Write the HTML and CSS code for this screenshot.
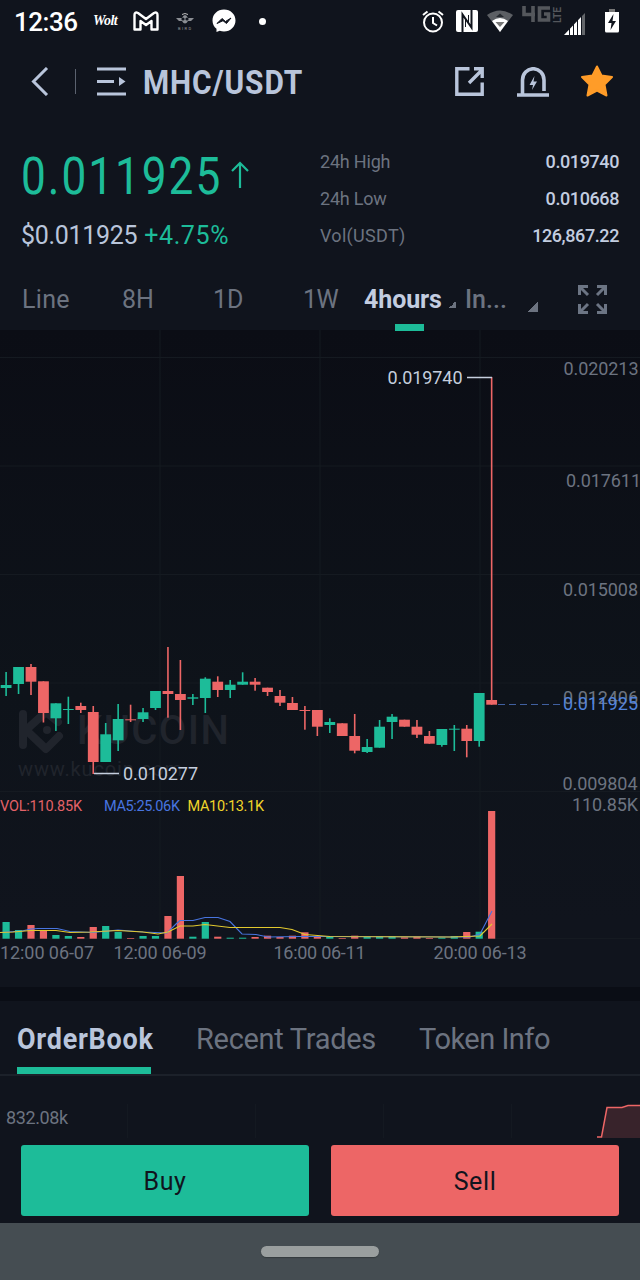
FILE: index.html
```html
<!DOCTYPE html>
<html lang="en">
<head>
  <meta charset="UTF-8">
  <meta name="viewport" content="width=device-width, initial-scale=1.0">
  <title>MHC/USDT</title>
  <link rel="stylesheet" href="styles.css">
</head>
<body>
  <div class="status-bar">
    <span class="clock">12:36</span>
    <span class="wolt">Wolt</span>
    <svg class="gmail" width="26" height="20" viewBox="0 0 26 20"><path d="M1.500 18.500V4Q1.500 .5 5 2L13 8L21 2Q24.500 .5 24.500 4V18.500H18.500V10L13 14L7.500 10V18.500Z" fill="none" stroke="#fff" stroke-width="2.400" stroke-linejoin="round"/></svg>
    <svg class="bird" width="20" height="18" viewBox="0 0 20 18"><path d="M1 5H7Q10-1 13 5H19L16 8H13Q10 13 7 8H4Z" fill="#8b8e94"/><circle cx="8" cy="6" r="1.600" fill="#10141d"/><circle cx="12" cy="6" r="1.600" fill="#10141d"/><path d="M7 1.500Q10-.5 13 1.500" stroke="#bbb" fill="none"/><text x="3" y="17" class="bird-text">BIRD</text></svg>
    <svg class="messenger" width="24" height="24" viewBox="0 0 24 24"><path d="M12 .5C5.500.5.5 5.200.5 11.500C.5 15 2 17.800 4.500 19.800V23L7.700 21.800C16 24.500 23.500 19 23.500 11.500C23.500 5.200 18.500.5 12 .5Z" fill="#fff"/><path d="M5 14.500L10 9.500L13.500 12.500L19 9L14.500 14.500L11 11.700Z" fill="#10141d" stroke="#10141d"/></svg>
    <i class="dot"></i>
    <svg class="alarm" width="22" height="24" viewBox="0 0 22 24"><circle cx="11" cy="13.500" r="9" fill="none" stroke="#fff" stroke-width="2"/><path d="M1 6L5.500 2.500M21 6L16.500 2.500M11 8V14L15 16.500" fill="none" stroke="#fff" stroke-width="2"/></svg>
    <svg class="nfc" width="22" height="22" viewBox="0 0 22 22"><rect width="22" height="22" rx="2" fill="#fff"/><path d="M6.500 22V4.500L15.500 17.500V0" fill="none" stroke="#10141d" stroke-width="2"/><path d="M9.500 17V9M12.500 5V13" fill="none" stroke="#10141d" stroke-width="1"/></svg>
    <svg class="wifi" width="26" height="22" viewBox="0 0 26 22"><path d="M0 5Q13-4 26 5L13 22Z" fill="#5c5f64"/><path d="M5 11Q13 5 21 11L13 22Z" fill="#fff"/><path d="M8.500 12H17.500L13 17Z" fill="#777"/><path d="M9 7L13 3.500L17 7Z" fill="#25292f"/></svg>
    <svg class="lte" width="40" height="18" viewBox="0 0 40 18"><path d="M2 0V8.500H13M11 0V16M28 2H17.500V14H26.500V8H22" fill="none" stroke="#54575c" stroke-width="3.600"/><text transform="translate(38.500 17) rotate(-90)" textLength="16" class="lte-text">LTE</text></svg>
    <svg class="signal" width="21" height="22" viewBox="0 0 21 22"><path d="M0 22L17 4V22Z" fill="#fff"/><path d="M18 3L21 0V22H18Z" fill="#63666a"/><path d="M5.500 15V22M9.500 10V22M13.500 6V22M17.500 2V22" stroke="#10141d"/></svg>
    <svg class="battery" width="14" height="24" viewBox="0 0 14 24"><path d="M4 0H10V3H4Z" fill="#777"/><path d="M0 3H14V22Q14 23.500 12.500 23.500H1.500Q0 23.500 0 22Z" fill="#fff"/><path d="M8.500 5L3 14H6.500L5.500 21L11 12H7.500Z" fill="#10141d"/></svg>
  </div>

  <div class="title-bar">
    <svg class="back" width="18" height="29" viewBox="0 0 18 29"><path d="M16 1L2.500 14.500L16 28" fill="none" stroke="#b9c5db" stroke-width="3"/></svg>
    <i class="divider"></i>
    <svg class="menu" width="29" height="29" viewBox="0 0 29 29"><path d="M0 2H29M0 14.500H17M0 27H29" stroke="#b9c5db" stroke-width="3"/><path d="M22 10L28.500 14.500L22 19Z" fill="#b9c5db"/></svg>
    <h1><span>MHC/USDT</span></h1>
    <svg class="share" width="30" height="29" viewBox="0 0 30 29"><path d="M14.500 1.800H1.800V27.200H27.200V15.500M14 16L26.500 3.500M19 1.800H27.200V11" fill="none" stroke="#b9c5db" stroke-width="3.400"/></svg>
    <svg class="alert" width="32" height="30" viewBox="0 0 32 30"><path d="M5.500 28V13A10.500 11 0 0 1 27 13V24M0 28H32" fill="none" stroke="#b9c5db" stroke-width="3.600"/><path d="M17.500 9L12.500 18H16L15 23L20 14.500H16.500Z" fill="#b9c5db"/></svg>
    <svg class="star" width="34" height="32" viewBox="0 0 34 32"><path d="M17 1.500L21.500 10.500L32 12L24.500 19.500L26.500 30.500L17 25.500L7.500 30.500L9.500 19.500L2 12L12.500 10.500Z" fill="#ff9c28" stroke="#ff9c28" stroke-width="2" stroke-linejoin="round"/></svg>
  </div>

  <div class="summary">
    <div class="price-box">
      <div class="price"><span>0.011925</span><svg width="18" height="27" viewBox="0 0 18 27"><path d="M9 27V2M1 10L9 2L17 10" fill="none" stroke="#1dbc99" stroke-width="2.200"/></svg></div>
      <div class="fiat">$0.011925 <span>+4.75%</span></div>
    </div>
    <dl class="stats">
      <dt>24h High</dt><dd>0.019740</dd>
      <dt>24h Low</dt><dd>0.010668</dd>
      <dt>Vol(USDT)</dt><dd>126,867.22</dd>
    </dl>
  </div>

  <div class="intervals">
    <span>Line</span>
    <span>8H</span>
    <span>1D</span>
    <span>1W</span>
    <span class="active">4hours</span>
    <i class="corner small"></i>
    <span class="indicator">In...</span>
    <i class="corner"></i>
    <svg width="29" height="29" viewBox="0 0 29 29"><path d="M1.500 10V1.500H10M2 2L10 10M19 1.500H27.500V10M27 2L19 10M1.500 19V27.500H10M2 27L10 19M27.500 19V27.500H19M27 27L19 19" fill="none" stroke="#6c7584" stroke-width="3"/></svg>
  </div>

  <svg class="chart" id="chart" width="640" height="657" viewBox="0 330 640 657">
    <path class="grid" d="M0 357.500H640M0 466H640M0 574.500H640M0 683H640M0 791.500H640M0 938.500H640M160 330V938M320 330V938M480 330V938"/>
    <g class="watermark">
      <path d="M23 714V745M26 730L46 749L59 736M26 730L46 712L58 722" fill="none" stroke="#20242c" stroke-width="8" stroke-linecap="round" stroke-linejoin="round"/>
      <circle cx="47" cy="730" r="4"/>
      <text x="77" y="744" class="mark" textLength="152">KUCOIN</text>
      <text x="18" y="776" class="site" textLength="164">www.kucoin.com</text>
    </g>
    <g id="candles"></g>
    <g id="volumes"></g>
    <path class="ma5" d="M0 932.500L22 931L31 929L38 928.500L57 928.500L70 931.500L93 932.500L118 930L143 932L167 933L176 924L180 920.500L193 920.500L205 917.500L218 917.500L230 921.500L242 934L256 934.500L268 937L300 936.500L320 936.500L470 937L480 934L492 911"/>
    <path class="ma10" d="M0 932.500L13 932L31 930.500L56 930.500L70 932.500L90 932L118 930.500L143 932L158 934L168 932L180 926L193 926L205 924.500L230 927.500L280 927.500L292 929.500L305 934.500L330 936.500L450 937L480 936L492 924"/>
    <path d="M467 377.500H492M94 773.500H119" stroke="#c5cede" stroke-width="1.400"/>
    <path d="M498 704.500H562" stroke="#4060a0" stroke-dasharray="7 4"/>
    <g class="callout">
      <text x="387.500" y="384" textLength="75">0.019740</text>
      <text x="123" y="780" textLength="75">0.010277</text>
    </g>
    <g class="axis">
      <text x="563.500" y="375" textLength="75">0.020213</text>
      <text x="566" y="487" textLength="75">0.017611</text>
      <text x="563" y="596" textLength="75">0.015008</text>
      <text x="563" y="704" textLength="75">0.012406</text>
      <text x="563" y="710" textLength="75" class="current">0.011925</text>
      <text x="562.500" y="790" textLength="75">0.009804</text>
      <text x="572" y="811" textLength="66">110.85K</text>
      <text x="0" y="959" textLength="94">12:00 06-07</text>
      <text x="113.500" y="959" textLength="93">12:00 06-09</text>
      <text x="273.500" y="959" textLength="92">16:00 06-11</text>
      <text x="433.500" y="959" textLength="93">20:00 06-13</text>
    </g>
    <g class="legend">
      <text x="0" y="811" fill="#e36268" textLength="82">VOL:110.85K</text>
      <text x="104" y="811" fill="#4875e0" textLength="76">MA5:25.06K</text>
      <text x="187.500" y="811" fill="#f0d52a" textLength="76.500">MA10:13.1K</text>
    </g>
  </svg>

  <div class="tabs">
    <span class="active"><b>OrderBook</b></span>
    <span class="trades">Recent Trades</span>
    <span class="token">Token Info</span>
  </div>

  <div class="depth">
    <span>832.08k</span>
    <svg width="44" height="34" viewBox="0 0 44 34"><path d="M6 33L11 4H26L32 2H44V34H6Z" fill="#38232b"/><path d="M1 33H5.500L11 3.500H26L32 1.500H44" fill="none" stroke="#ed6666" stroke-width="1.500"/></svg>
  </div>

  <div class="actions">
    <button class="buy">Buy</button>
    <button class="sell">Sell</button>
  </div>

  <div class="nav-bar"><i></i></div>

  <script src="script.js"></script>
</body>
</html>
```
FILE: styles.css
```css
* {
  box-sizing: border-box;
}

body {
  margin: 0;
  width: 640px;
  height: 1280px;
  overflow: hidden;
  background-color: #10141d;
  font-family: Roboto, "Liberation Sans", sans-serif;
  color: #6c7380;
}

svg {
  display: block;
  flex-shrink: 0;
}

/* status bar */
.status-bar {
  display: flex;
  align-items: flex-start;
  height: 44px;
  padding-left: 14px;
  color: white;
}

.clock {
  width: 79px;
  margin-top: 7px;
  font-size: 26px;
  line-height: 30px;
  font-weight: 500;
  letter-spacing: -0.5px;
}

.wolt {
  width: 40px;
  margin-top: 13px;
  font-family: "Liberation Serif", serif;
  font-size: 14px;
  line-height: 16px;
  font-style: italic;
  font-weight: 700;
  letter-spacing: -0.5px;
}

.gmail {
  margin-top: 11px;
}

.bird {
  margin: 13px 0 0 16px;
}

.bird-text {
  font-size: 4px;
  fill: #999;
  letter-spacing: 1.5px;
}

.messenger {
  margin: 9px 0 0 17px;
}

.dot {
  width: 7px;
  height: 7px;
  margin: 18px 0 0 23px;
  border-radius: 50%;
  background-color: white;
}

.alarm {
  margin: 9px 0 0 156px;
}

.nfc {
  margin: 10px 0 0 12px;
}

.wifi {
  margin: 10px 0 0 9px;
}

.lte {
  margin: 6px 0 0 9px;
}

.lte-text {
  font-size: 10px;
  font-weight: 700;
  fill: #54575c;
}

.signal {
  margin: 13px 0 0 2px;
}

.battery {
  margin: 9px 0 0 20px;
}

/* title */
.title-bar {
  display: flex;
  align-items: center;
  height: 75px;
  padding-left: 31px;
}

.divider {
  width: 1px;
  height: 25px;
  margin: 0 21px 0 26px;
  background-color: #5b626f;
}

h1 {
  width: 312px;
  margin: 0 0 0 17px;
  color: #b9c5db;
  font-size: 34px;
  font-weight: 700;
  letter-spacing: 1px;
}

h1 span {
  display: inline-block;
  transform: scaleX(0.88);
  transform-origin: left;
}

.alert {
  margin-left: 32px;
}

.star {
  margin: -2px 0 0 31px;
}

/* price and 24h stats */
.summary {
  display: flex;
  height: 150px;
  padding: 24px 21px 0;
}

.price-box {
  width: 299px;
}

.price {
  display: flex;
  align-items: center;
  height: 66px;
  color: #1dbc99;
  font-size: 52px;
  letter-spacing: 2.3px;
}

.price span {
  width: 210px;
  transform: scaleX(0.85);
  transform-origin: left;
}

.price svg {
  margin-top: -4px;
}

.fiat {
  margin-top: 10px;
  color: #b9c5db;
  font-size: 25px;
  line-height: 33px;
  letter-spacing: -0.3px;
}

.fiat span {
  margin-left: 1px;
  color: #1dbc99;
  letter-spacing: 0.6px;
}

.stats {
  display: grid;
  grid-template-columns: 1fr 1fr;
  grid-auto-rows: 37px;
  flex: 1;
  margin: 0;
  font-size: 18px;
  line-height: 37px;
}

.stats dt {
  letter-spacing: -0.2px;
}

.stats dt:last-of-type {
  letter-spacing: 0.3px;
}

.stats dd {
  margin: 0;
  color: #c3cde0;
  text-align: right;
  font-weight: 500;
  letter-spacing: -0.4px;
}

/* interval switcher */
.intervals {
  display: flex;
  align-items: center;
  height: 61px;
  padding-left: 22px;
  font-size: 25px;
  line-height: 65px;
}

.intervals span {
  width: 91px;
}

.intervals span:first-child {
  width: 100px;
  letter-spacing: 0.3px;
}

.intervals span:nth-child(4) {
  width: 61px;
  margin-left: -1px;
  letter-spacing: -0.6px;
}

.intervals .active {
  position: relative;
  width: 85px;
  color: #c3cde0;
  font-weight: 700;
  letter-spacing: -0.1px;
}

.intervals .active::after {
  content: "";
  position: absolute;
  left: 31px;
  bottom: 1px;
  width: 29px;
  height: 7px;
  background-color: #1dbc99;
}

.intervals .indicator {
  width: 63px;
  margin-left: 9px;
  font-weight: 500;
}

.corner {
  width: 10px;
  height: 10px;
  margin-top: 15px;
  background: linear-gradient(135deg, transparent 50%, #6c7380 50%);
}

.corner.small {
  width: 7px;
  height: 7px;
  margin-top: 10px;
}

.intervals svg {
  margin-left: 40px;
}

/* chart */
.chart {
  background: linear-gradient(#0b0d15, #0e131a 55%, #10141d 90%);
  font-size: 18px;
}

.grid {
  fill: none;
  stroke: #151a21;
}

.watermark {
  fill: #20242c;
}

.mark {
  font-size: 40px;
  font-weight: 500;
}

.site {
  font-size: 20px;
}

.up {
  fill: #1dbc99;
}

.down {
  fill: #ed6666;
}

.ma5,
.ma10 {
  fill: none;
  stroke: #4875e0;
  stroke-width: 1.1;
}

.ma10 {
  stroke: #e2c92e;
}

.callout {
  fill: #c5cede;
}

.axis {
  fill: #6c7380;
}

.axis .current {
  fill: #5284dc;
}

.legend {
  font-size: 14.5px;
}

/* order book tabs */
.tabs {
  display: flex;
  height: 89px;
  padding-left: 17px;
  border-top: 14px solid #0a0d15;
  border-bottom: 2px solid #1c212a;
  font-size: 29px;
  line-height: 77px;
}

.tabs .active {
  position: relative;
  width: 179px;
  color: #b9c5db;
}

.tabs b {
  display: inline-block;
  letter-spacing: 0.8px;
  transform: scaleX(0.93);
  transform-origin: left;
}

.tabs .active::after {
  content: "";
  position: absolute;
  left: 0;
  top: 66px;
  width: 134px;
  height: 7px;
  background-color: #1dbc99;
}

.trades {
  width: 223px;
  letter-spacing: -0.3px;
}

.token {
  letter-spacing: -0.5px;
}

.depth {
  display: flex;
  justify-content: space-between;
  height: 62px;
  padding: 28px 0 0 6px;
  font-size: 18px;
  line-height: 27px;
  letter-spacing: -0.4px;
  background: repeating-linear-gradient(90deg, transparent 0 127px, #141921 127px 128px) 0 28px no-repeat;
}

/* buttons */
.actions {
  display: flex;
  gap: 22px;
  padding: 7px 21px;
}

.actions button {
  flex: 1;
  height: 71px;
  padding-top: 3px;
  border: none;
  border-radius: 3px;
  font-family: inherit;
  font-size: 25px;
  letter-spacing: 0.6px;
  color: #10141d;
}

.actions .buy {
  background-color: #1dbc99;
}

.actions .sell {
  background-color: #ed6666;
}

.nav-bar {
  display: flex;
  justify-content: center;
  height: 57px;
  padding-top: 23px;
  background-color: #454d52;
}

.nav-bar i {
  width: 118px;
  height: 11px;
  border-radius: 6px;
  background-color: #9a9f9f;
  box-shadow: 0 1px 1px #343b3e;
}
```
FILE: script.js
```js
// [high, body top, body bottom, low, volume top, up]
const candles = [
  [672, 685, 688, 696, 922, 1],
  [667, 667, 684, 694, 930, 1],
  [664, 667, 681.7, 695, 925, 0],
  [681.3, 681.3, 713, 722.5, 930.3, 0],
  [703.3, 703.3, 718.3, 731, 935, 1],
  [696.7, 709, 710, 724, 936, 1],
  [702.7, 706, 710, 713, 937, 0],
  [706, 712, 762, 774, 927, 0],
  [723, 734.3, 762, 762, 926, 1],
  [704, 719, 740.3, 751, 932, 1],
  [704.7, 719.3, 720.3, 722, 938, 0],
  [708, 712.3, 719, 722, 936, 1],
  [691, 691, 708, 710, 936, 1],
  [647, 691, 694, 717.7, 916, 0],
  [660, 694, 700, 730, 876, 0],
  [694, 697.3, 698.7, 705, 936.7, 1],
  [677.3, 678.7, 698, 713, 922, 1],
  [676.3, 681.7, 690, 697, 936.7, 0],
  [680, 684.7, 690, 698, 937.7, 1],
  [672.3, 681.7, 684.7, 684.7, 937.7, 1],
  [678, 681.7, 684.7, 690.7, 937, 0],
  [687.7, 687.7, 692, 696, 935.7, 0],
  [690, 696, 702.7, 706, 937, 0],
  [697, 703, 710, 710, 935.7, 0],
  [706, 710, 711, 729.7, 932.3, 0],
  [710, 710, 726.7, 736, 936, 0],
  [718.3, 722, 725, 733, 936.3, 1],
  [723.3, 723.3, 736, 736, 938, 0],
  [714, 736, 750.7, 753.3, 935.7, 0],
  [739, 747, 752, 753, 936.7, 1],
  [720, 726.7, 747.7, 747.7, 936, 1],
  [714, 716.7, 722, 739, 936, 1],
  [719.7, 719.7, 726.7, 726.7, 937.3, 0],
  [720, 726.7, 734.7, 738, 936.7, 0],
  [731, 736, 743.7, 743.7, 938, 0],
  [729, 729, 745, 746.7, 937.5, 1],
  [725, 728.7, 729.7, 751, 936, 1],
  [725, 728.7, 741, 757.3, 932, 0],
  [693, 693, 741, 746.7, 931.7, 1],
  [377, 700, 704.7, 704.7, 811, 0]
];

const step = 12.45;
const baseline = 938.7;

function rect(parent, x, y, width, height, up) {
  const el = document.createElementNS("http://www.w3.org/2000/svg", "rect");
  el.setAttribute("x", x);
  el.setAttribute("y", y);
  el.setAttribute("width", width);
  el.setAttribute("height", height);
  el.setAttribute("class", up ? "up" : "down");
  parent.appendChild(el);
}

const candleLayer = document.getElementById("candles");
const volumeLayer = document.getElementById("volumes");

candles.forEach(([high, top, bottom, low, volume, up], i) => {
  const x = 6.1 + i * step;
  rect(candleLayer, x - 0.8, high, 1.6, low - high, up);
  rect(candleLayer, x - 5.4, top, 10.8, bottom - top, up);
  rect(volumeLayer, x - 3.6, volume, 7.2, baseline - volume, up);
});
```
